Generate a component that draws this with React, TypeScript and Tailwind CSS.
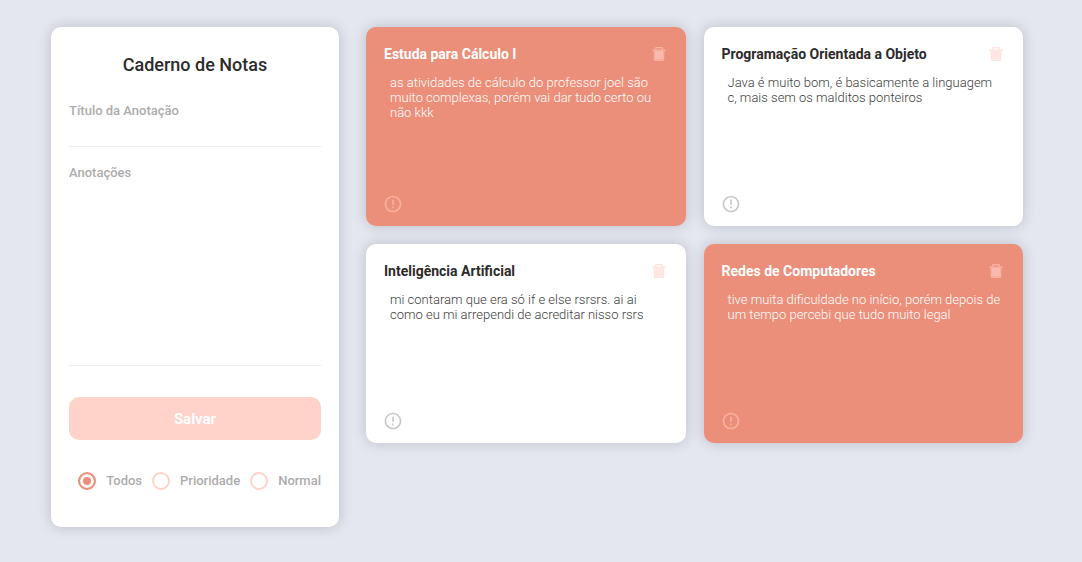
import { useState } from "react";
import { AiTwotoneDelete } from "react-icons/ai";
import { MdErrorOutline } from "react-icons/md";

type Note = { id: number; title: string; text: string; priority: boolean };

const initialNotes: Note[] = [
  { id: 1, title: "Estuda para Cálculo I", text: "as atividades de cálculo do professor joel são muito complexas, porém vai dar tudo certo ou não kkk", priority: true },
  { id: 2, title: "Programação Orientada a Objeto", text: "Java é muito bom, é basicamente a linguagem c, mais sem os malditos ponteiros", priority: false },
  { id: 3, title: "Inteligência Artificial", text: "mi contaram que era só if e else rsrsrs. ai ai como eu mi arrependi de acreditar nisso rsrs", priority: false },
  { id: 4, title: "Redes de Computadores", text: "tive muita dificuldade no início, porém depois de um tempo percebi que tudo muito legal", priority: true },
];

const filters = ["Todos", "Prioridade", "Normal"];

function NoteCard({ note, onDelete, onToggle }: { note: Note; onDelete: () => void; onToggle: () => void }) {
  const p = note.priority;
  return (
    <li className={`flex min-h-[199px] flex-col rounded-[10px] px-[18px] pt-[18px] pb-3 shadow-[0_0_14px_rgba(0,0,0,0.18)] ${p ? "bg-[#eb8f7a]" : "bg-white"}`}>
      <div className="flex items-center justify-between">
        <h2 className={`text-sm leading-[18px] font-bold ${p ? "text-white" : "text-[#2b2b2b]"}`}>{note.title}</h2>
        <button type="button" aria-label="Excluir" onClick={onDelete} className={p ? "text-[#f9b1a2]" : "text-[#ffe3dd]"}>
          <AiTwotoneDelete size={18} className={p ? "[&>path:first-child]:fill-[#f9b9ac]" : "[&>path:first-child]:fill-[#ffe8e4]"} />
        </button>
      </div>
      <p className={`mt-3 grow pr-[3px] pl-1.5 text-[13px] leading-[15px] font-light ${p ? "text-white" : "text-[#3c3c3c]"}`}>{note.text}</p>
      <button type="button" aria-label="Alternar prioridade" onClick={onToggle} className={`-ml-px self-start ${p ? "text-[#f9b1a2]" : "text-[#c8c8c8]"}`}>
        <MdErrorOutline size={20} />
      </button>
    </li>
  );
}

export default function App() {
  const [notes, setNotes] = useState(initialNotes);
  const [filter, setFilter] = useState("Todos");
  const shown = notes.filter((n) => filter === "Todos" || n.priority === (filter === "Prioridade"));

  return (
    <div className="flex min-h-screen items-start gap-[27px] bg-[#e4e7f0] pt-[27px] pr-[59px] pb-[35px] pl-[51px] font-['Roboto',sans-serif]">
      <aside className="w-72 shrink-0 rounded-[10px] bg-white px-[18px] pt-[26px] pb-[37px] shadow-[0_0_14px_rgba(0,0,0,0.18)]">
        <h1 className="text-center text-lg leading-6 font-medium text-[#2b2b2b]">Caderno de Notas</h1>
        <form onSubmit={(e) => e.preventDefault()} className="mt-[26px] flex flex-col text-[13px] leading-4 font-medium text-[#acacac]">
          <label htmlFor="title">Título da Anotação</label>
          <input id="title" className="h-7 border-b border-[#ebebeb] text-[#5c5c5c] outline-none" />
          <label htmlFor="notes" className="mt-[18px]">Anotações</label>
          <textarea id="notes" className="h-[185px] resize-none border-b border-[#ebebeb] text-[#5c5c5c] outline-none" />
          <button type="submit" className="mt-[31px] h-[43px] rounded-[10px] bg-[#ffd3ca] text-[15px] font-bold text-white">Salvar</button>
        </form>
        <div className="mt-8 flex items-center justify-end gap-2.5">
          {filters.map((f) => (
            <label key={f} className="flex items-center gap-2.5 text-[13px] leading-[18px] font-medium text-[#acacac]">
              <input
                type="radio"
                name="filter"
                checked={filter === f}
                onChange={() => setFilter(f)}
                className="size-[18px] appearance-none rounded-full border-2 border-[#ffd3ca] checked:border-[#eb8f7a] checked:bg-[#eb8f7a] checked:shadow-[inset_0_0_0_3px_white]"
              />
              {f}
            </label>
          ))}
        </div>
      </aside>
      <ul className="grid grow grid-cols-2 gap-[18px]">
        {shown.map((n) => (
          <NoteCard
            key={n.id}
            note={n}
            onDelete={() => setNotes(notes.filter((o) => o.id !== n.id))}
            onToggle={() => setNotes(notes.map((o) => (o.id === n.id ? { ...o, priority: !o.priority } : o)))}
          />
        ))}
      </ul>
    </div>
  );
}
